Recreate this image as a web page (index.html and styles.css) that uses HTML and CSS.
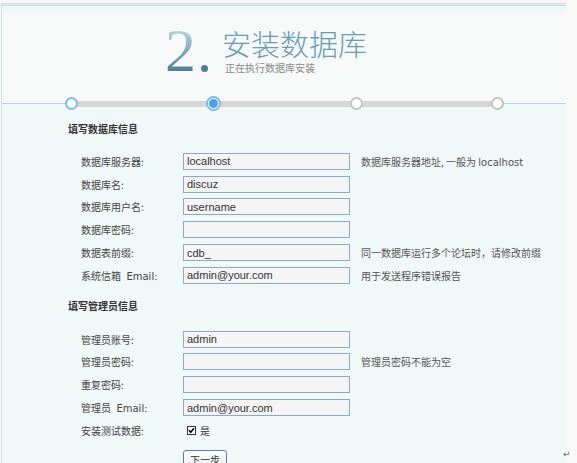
FILE: index.html
```html
<!DOCTYPE html>
<html lang="zh-CN">
<head>
<meta charset="utf-8">
<title>安装数据库</title>
<link rel="stylesheet" href="styles.css">
</head>
<body>
<div class="wrap">
  <div class="topbar"></div>
  <div class="header">
    <div class="num">2<span class="dot"></span></div>
    <div class="titles">
      <div class="title">安装数据库</div>
      <div class="subtitle">正在执行数据库安装</div>
    </div>
  </div>
  <div class="steps">
    <div class="track">
      <span class="step done"></span>
      <span class="step current"><span class="inner"></span></span>
      <span class="step"></span>
      <span class="step"></span>
    </div>
  </div>
  <div class="main">
    <div class="section-title">填写数据库信息</div>
    <div class="form">
      <div class="label">数据库服务器:</div><input class="field" type="text" value="localhost"><div class="tip">数据库服务器地址, 一般为 <span class="lat">localhost</span></div>
      <div class="label">数据库名:</div><input class="field" type="text" value="discuz"><div class="tip"></div>
      <div class="label">数据库用户名:</div><input class="field" type="text" value="username"><div class="tip"></div>
      <div class="label">数据库密码:</div><input class="field" type="text" value=""><div class="tip"></div>
      <div class="label">数据表前缀:</div><input class="field" type="text" value="cdb_"><div class="tip">同一数据库运行多个论坛时，请修改前缀</div>
      <div class="label">系统信箱 <span class="lat">&nbsp;Email:</span></div><input class="field" type="text" value="admin@your.com"><div class="tip">用于发送程序错误报告</div>
    </div>
    <div class="section-title second">填写管理员信息</div>
    <div class="form">
      <div class="label">管理员账号:</div><input class="field" type="text" value="admin"><div class="tip"></div>
      <div class="label">管理员密码:</div><input class="field" type="text" value=""><div class="tip">管理员密码不能为空</div>
      <div class="label">重复密码:</div><input class="field" type="text" value=""><div class="tip"></div>
      <div class="label">管理员 <span class="lat">&nbsp;Email:</span></div><input class="field" type="text" value="admin@your.com"><div class="tip"></div>
      <div class="label">安装测试数据:</div>
      <div class="check"><svg class="box" width="9" height="9" viewBox="0 0 9 9"><rect x="0.5" y="0.5" width="8" height="8" fill="#fff" stroke="#333"/><path d="M2 4.2 L3.7 6.2 L7 2.3" fill="none" stroke="#000" stroke-width="1.6"/></svg><span>是</span></div>
      <div class="tip"></div>
    </div>
    <div class="actions"><button class="btn" type="button">下一步</button></div>
  </div>
</div>
<span class="para">↵</span>
</body>
</html>
```

FILE: styles.css
```css
html, body {
  margin: 0;
  padding: 0;
  background: #f8f8f8;
  overflow: hidden;
}
body {
  position: relative;
  height: 463px;
  font-family: "Noto Sans CJK SC", "DejaVu Sans", sans-serif;
  font-size: 10px;
  color: #444;
}
.wrap {
  margin: 3px 0 0 1px;
  width: 564px;
  border-left: 1px solid #d3dfe6;
}
.topbar {
  height: 8px;
  border-top: 1px solid #d2dfea;
  box-shadow: inset 0 1px 0 #e6eef4, inset 0 2px 0 #c9d8e3;
  background: #eef8f8;
}
.header {
  height: 84px;
  box-sizing: border-box;
  padding: 9px 0 0 163px;
  display: flex;
  background: #f7f8f8;
}
.num {
  font-family: "Liberation Serif", serif;
  font-size: 62px;
  line-height: 62px;
  height: 62px;
  margin-top: -2px;
  background: linear-gradient(to bottom, #b3d0dc 20%, #4c7f96 85%);
  -webkit-background-clip: text;
  background-clip: text;
  color: transparent;
  display: flex;
  align-items: flex-end;
}
.dot {
  width: 7px;
  height: 7px;
  border-radius: 50%;
  background: #527f94;
  margin: 0 0 9px 5px;
}
.titles {
  margin-left: 14px;
  padding-top: 9px;
}
.title {
  font-size: 29px;
  line-height: 26px;
  font-weight: 300;
  color: #6a9db3;
}
.subtitle {
  margin-top: 6px;
  margin-left: 3px;
  font-size: 10px;
  line-height: 12px;
  color: #8a8a8a;
}
.steps {
  height: 15px;
  background: linear-gradient(to bottom, #f7f8f8 0, #f7f8f8 7px, #b3d2e2 7px, #b3d2e2 8px, #f0f8f8 8px);
  display: flex;
  align-items: center;
  padding-left: 63px;
}
.track {
  width: 439px;
  height: 15px;
  display: flex;
  align-items: center;
  justify-content: space-between;
  background: linear-gradient(#d6d6d6, #d6d6d6) center / calc(100% - 12px) 6px no-repeat;
}
.step {
  box-sizing: border-box;
  width: 13px;
  height: 13px;
  border-radius: 50%;
  border: 2px solid #c4c4c4;
  background: #fff;
}
.step.done {
  border-color: #7cbbe6;
}
.step.current {
  width: 15px;
  height: 15px;
  border-color: #7cbbe6;
  display: flex;
  align-items: center;
  justify-content: center;
}
.inner {
  width: 9px;
  height: 9px;
  border-radius: 50%;
  background: #4aa3e6;
}
.main {
  height: 346px;
  background: #f0f8f8;
  border-bottom: 1px solid #e2e6e8;
  padding-top: 10px;
}
.section-title {
  margin-left: 66px;
  height: 16px;
  line-height: 16px;
  font-weight: bold;
  color: #333;
}
.section-title.second {
  margin-top: 11px;
}
.form {
  margin: 13px 0 0 79px;
  display: grid;
  grid-template-columns: 102px 178px auto;
  grid-auto-rows: 22.8px;
  align-items: center;
}
.section-title.second + .form {
  margin-top: 14px;
}
.label {
  color: #444;
  white-space: nowrap;
}
.lat {
  font-family: "DejaVu Sans", sans-serif;
  font-size: 10px;
}
.field {
  box-sizing: border-box;
  width: 167px;
  height: 17px;
  margin: 0;
  padding: 0 3px;
  border: 1px solid #8ea8c6;
  background: #f5f5f5;
  font-family: "Liberation Sans", sans-serif;
  font-size: 11px;
  line-height: 15px;
  color: #333;
  outline: none;
}
.tip {
  color: #555;
  white-space: nowrap;
}
.check {
  display: flex;
  align-items: center;
  padding-left: 4px;
  gap: 4px;
  color: #333;
}
.box {
  display: block;
}
.actions {
  margin: 8px 0 0 181px;
}
.btn {
  height: 19px;
  width: 44px;
  padding: 0;
  border: 1px solid #5c7bb0;
  border-radius: 3px;
  background: linear-gradient(to bottom, #ffffff, #e6ecf4);
  font-family: "Noto Sans CJK SC", sans-serif;
  font-size: 10px;
  color: #333;
  line-height: 15px;
}
.para {
  position: absolute;
  left: 563px;
  top: 449px;
  font-family: "DejaVu Sans", sans-serif;
  font-size: 9px;
  color: #666;
}
```
